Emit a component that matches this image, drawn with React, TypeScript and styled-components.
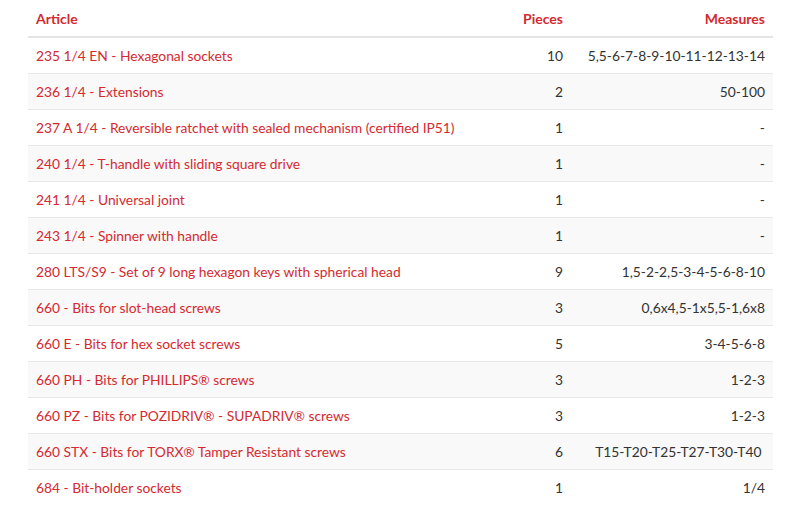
import React from "react";
import styled, { createGlobalStyle } from "styled-components";

const Global = createGlobalStyle`
  html, body { margin: 0; padding: 0; background: #fff; }
  body { font-family: Lato, "Open Sans", sans-serif; }
`;

const Wrap = styled.div`
  padding: 0 27px 0 28px;
`;

const Table = styled.table`
  width: 100%;
  border-collapse: collapse;
  table-layout: fixed;
  font-size: 13.8px;
`;

const Th = styled.th<{ $align?: string; $w?: number }>`
  color: #d42a30;
  font-size: 14px;
  font-weight: 700;
  text-align: ${(p) => p.$align || "left"};
  ${(p) => (p.$w ? `width: ${p.$w}px;` : "")}
  height: 36px;
  padding: 0 8px;
  border-bottom: 2px solid #e4e4e4;
  vertical-align: middle;
`;

const Tr = styled.tr<{ $striped: boolean }>`
  background: ${(p) => (p.$striped ? "#f9f9f9" : "#fff")};
`;

const Td = styled.td<{ $align?: string; $red?: boolean; $pre?: boolean }>`
  height: 35px;
  padding: 0 8px;
  border-top: 1px solid #e8e8e8;
  text-align: ${(p) => p.$align || "left"};
  color: ${(p) => (p.$red ? "#d42a30" : "#333")};
  white-space: ${(p) => (p.$pre ? "pre" : "nowrap")};
  vertical-align: middle;
`;

const rows: [string, string, string][] = [
  ["235 1/4 EN - Hexagonal sockets", "10", "5,5-6-7-8-9-10-11-12-13-14"],
  ["236 1/4 - Extensions", "2", "50-100"],
  ["237 A 1/4 - Reversible ratchet with sealed mechanism (certified IP51)", "1", "-"],
  ["240 1/4 - T-handle with sliding square drive", "1", "-"],
  ["241 1/4 - Universal joint", "1", "-"],
  ["243 1/4 - Spinner with handle", "1", "-"],
  ["280 LTS/S9 - Set of 9 long hexagon keys with spherical head", "9", "1,5-2-2,5-3-4-5-6-8-10"],
  ["660 - Bits for slot-head screws", "3", "0,6x4,5-1x5,5-1,6x8"],
  ["660 E - Bits for hex socket screws", "5", "3-4-5-6-8"],
  ["660 PH - Bits for PHILLIPS® screws", "3", "1-2-3"],
  ["660 PZ - Bits for POZIDRIV® - SUPADRIV® screws", "3", "1-2-3"],
  ["660 STX - Bits for TORX® Tamper Resistant screws", "6", "T15-T20-T25-T27-T30-T40 "],
  ["684 - Bit-holder sockets", "1", "1/4"],
];

export default function App() {
  return (
    <>
      <Global />
      <Wrap>
        <Table>
          <thead>
            <tr>
              <Th>Article</Th>
              <Th $align="right" $w={64}>Pieces</Th>
              <Th $align="right" $w={186}>Measures</Th>
            </tr>
          </thead>
          <tbody>
            {rows.map((r, i) => (
              <Tr key={i} $striped={i % 2 === 1}>
                <Td $red>{r[0]}</Td>
                <Td $align="right">{r[1]}</Td>
                <Td $align="right" $pre>{r[2]}</Td>
              </Tr>
            ))}
          </tbody>
        </Table>
      </Wrap>
    </>
  );
}
